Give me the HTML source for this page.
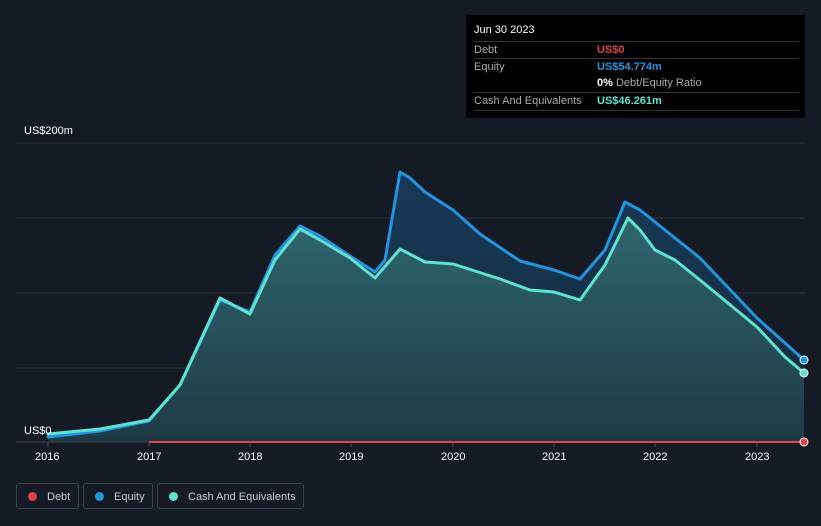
<!DOCTYPE html>
<html><head><meta charset="utf-8"><style>
body{margin:0;width:821px;height:526px;background:#151b24;font-family:"Liberation Sans",sans-serif;overflow:hidden;position:relative}
.t{position:absolute;font-size:11px;color:#fff}
.tip{position:absolute;left:466px;top:15px;width:339px;height:103px;background:#000;}
.tip .r{position:absolute;left:8px;right:6px;font-size:11px;color:#aaa;border-top:1px solid #333}
.tip .r span{font-weight:bold}
.leg{position:absolute;top:483px;height:26px;border:1px solid #3a404a;border-radius:3px;color:#ccc;font-size:11px;line-height:26px;box-sizing:border-box}
.leg i{display:inline-block;width:9px;height:9px;border-radius:50%;margin:0 10px 0 11px;vertical-align:-1px}
</style></head><body>
<svg width="821" height="526" style="position:absolute;left:0;top:0">
<defs>
<linearGradient id="ge" x1="0" y1="0" x2="0" y2="1"><stop offset="0" stop-color="#173a58"/><stop offset="1" stop-color="#15283a"/></linearGradient>
<linearGradient id="gc" x1="0" y1="0" x2="0" y2="1"><stop offset="0" stop-color="#2f6670"/><stop offset="1" stop-color="#1d3a44"/></linearGradient>
</defs>
<g stroke="#2c323b" stroke-width="1"><line x1="16" y1="143" x2="805" y2="143"/><line x1="16" y1="218" x2="805" y2="218"/><line x1="16" y1="293" x2="805" y2="293"/><line x1="16" y1="368" x2="805" y2="368"/><line x1="16" y1="442" x2="805" y2="442" stroke="#444"/></g>
<g stroke="#444"><line x1="48" y1="442" x2="48" y2="447"/><line x1="149" y1="442" x2="149" y2="447"/><line x1="250" y1="442" x2="250" y2="447"/><line x1="351" y1="442" x2="351" y2="447"/><line x1="453" y1="442" x2="453" y2="447"/><line x1="554" y1="442" x2="554" y2="447"/><line x1="655" y1="442" x2="655" y2="447"/><line x1="757" y1="442" x2="757" y2="447"/></g>
<polygon fill="url(#ge)" points="48,437 100,431 149,421 180,385 220,300 250,312 275,255 300,226 320,236 350,256 375,272 385,260 400,172 410,178 425,192 453,210 480,234 520,261 554,270 580,279 605,250 625,202 640,210 655,222 700,258 757,318 804,360 804,442 48,442"/>
<polygon fill="url(#gc)" points="48,434 100,429 149,420 180,385 220,298 250,314 275,260 300,229 320,240 350,258 375,278 400,249 425,262 453,264 500,279 530,290 554,292 580,300 605,265 628,218 640,230 655,250 675,260 700,280 757,327 785,357 804,373 804,442 48,442"/>
<polyline fill="none" stroke="#2394e0" stroke-width="3" stroke-linejoin="round" stroke-linecap="round" points="48,437 100,431 149,421 180,385 220,300 250,312 275,255 300,226 320,236 350,256 375,272 385,260 400,172 410,178 425,192 453,210 480,234 520,261 554,270 580,279 605,250 625,202 640,210 655,222 700,258 757,318 804,360"/>
<polyline fill="none" stroke="#5de3cf" stroke-width="3" stroke-linejoin="round" stroke-linecap="round" points="48,434 100,429 149,420 180,385 220,298 250,314 275,260 300,229 320,240 350,258 375,278 400,249 425,262 453,264 500,279 530,290 554,292 580,300 605,265 628,218 640,230 655,250 675,260 700,280 757,327 785,357 804,373"/>
<line x1="149" y1="442" x2="804" y2="442" stroke="#e0424a" stroke-width="2"/>
<circle cx="804" cy="360" r="4" fill="#2394e0" stroke="#fff" stroke-width="1"/>
<circle cx="804" cy="373" r="4" fill="#5de3cf" stroke="#fff" stroke-width="1"/>
<circle cx="804" cy="442" r="4" fill="#e0424a" stroke="#fff" stroke-width="1"/>
</svg>
<div class="t" style="left:24px;top:125px">US$200m</div>
<div class="t" style="left:24px;top:425px">US$0</div>
<div class="t" style="left:35px;top:451px">2016</div>
<div class="t" style="left:137px;top:451px">2017</div>
<div class="t" style="left:238px;top:451px">2018</div>
<div class="t" style="left:339px;top:451px">2019</div>
<div class="t" style="left:441px;top:451px">2020</div>
<div class="t" style="left:542px;top:451px">2021</div>
<div class="t" style="left:643px;top:451px">2022</div>
<div class="t" style="left:745px;top:451px">2023</div>
<div class="tip">
<div style="position:absolute;left:8px;top:9px;color:#fff;font-size:11px">Jun 30 2023</div>
<div class="r" style="top:26px;height:17px;line-height:17px">Debt<span style="position:absolute;left:123px;color:#e0424a">US$0</span></div>
<div class="r" style="top:43px;height:17px;line-height:17px">Equity<span style="position:absolute;left:123px;color:#2394e0">US$54.774m</span></div>
<div class="r" style="top:60px;height:17px;line-height:17px;border:0"><span style="position:absolute;left:123px;font-weight:normal"><b style="color:#fff">0%</b> Debt/Equity Ratio</span></div>
<div class="r" style="top:77px;height:17px;line-height:17px">Cash And Equivalents<span style="position:absolute;left:123px;color:#5de3cf">US$46.261m</span></div>
<div class="r" style="top:95px;height:0"></div>
</div>
<div class="leg" style="left:16px;width:63px"><i style="background:#e0424a"></i>Debt</div>
<div class="leg" style="left:83px;width:70px"><i style="background:#2394e0"></i>Equity</div>
<div class="leg" style="left:157px;width:147px"><i style="background:#5de3cf"></i>Cash And Equivalents</div>
</body></html>
